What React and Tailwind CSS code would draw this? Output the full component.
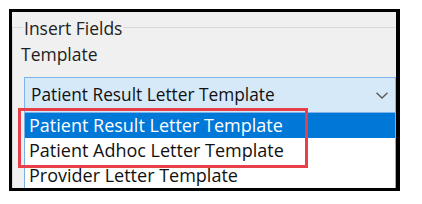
import React from 'react';

const templates = [
  'Patient Result Letter Template',
  'Patient Adhoc Letter Template',
  'Provider Letter Template',
];

function App() {
  const selected = 0;

  return (
    <div className="w-[422px] h-[204px] bg-white pt-[9px] pl-[9px]" style={{ fontFamily: '"Open Sans", "Noto Sans", sans-serif' }}>
      <div className="relative w-[391px] h-[182px] border-[3px] border-r-4 border-black bg-[#f0f0f0] overflow-hidden">
        {/* Group box */}
        <div className="relative mt-[15px] border-t border-l border-[#d9d9d9]">
          <span className="absolute -top-[10px] left-[10px] bg-[#f0f0f0] px-[1px] text-[17.5px] leading-[20px] text-[#222]">
            Insert Fields
          </span>

          <div className="mt-[16px] ml-[8px] text-[17.5px] leading-[20px] text-[#1e1e1e]">Template</div>

          {/* Combo box */}
          <div className="mt-[13px] ml-[11px] h-[36px] flex items-center justify-between border border-[#7eb4ea] bg-[#d6e9f9] pl-[6px] pr-[7px]">
            <span className="text-[17.3px] leading-[20px] text-[#111]">{templates[selected]}</span>
            <svg width="12" height="7" viewBox="0 0 12 7" fill="none" stroke="#5a5a5a" strokeWidth="1.4">
              <polyline points="0.5,0.8 6,6 11.5,0.8" />
            </svg>
          </div>

          {/* Dropdown list */}
          <div className="ml-[11px] border-l border-r border-[#7ab1e2] bg-white">
            {templates.map((t, i) => (
              <div
                key={t}
                className={`h-[25px] pl-[4px] text-[18px] leading-[25px] ${
                  i === selected ? 'bg-[#0078d7] text-white' : 'text-[#111]'
                }`}
              >
                {t}
              </div>
            ))}
          </div>
        </div>

        {/* Highlight annotation */}
        <div className="absolute left-[6px] top-[96px] w-[290px] h-[60px] border-[3px] border-[#e8404a]" />
      </div>
    </div>
  );
}

export default App;
